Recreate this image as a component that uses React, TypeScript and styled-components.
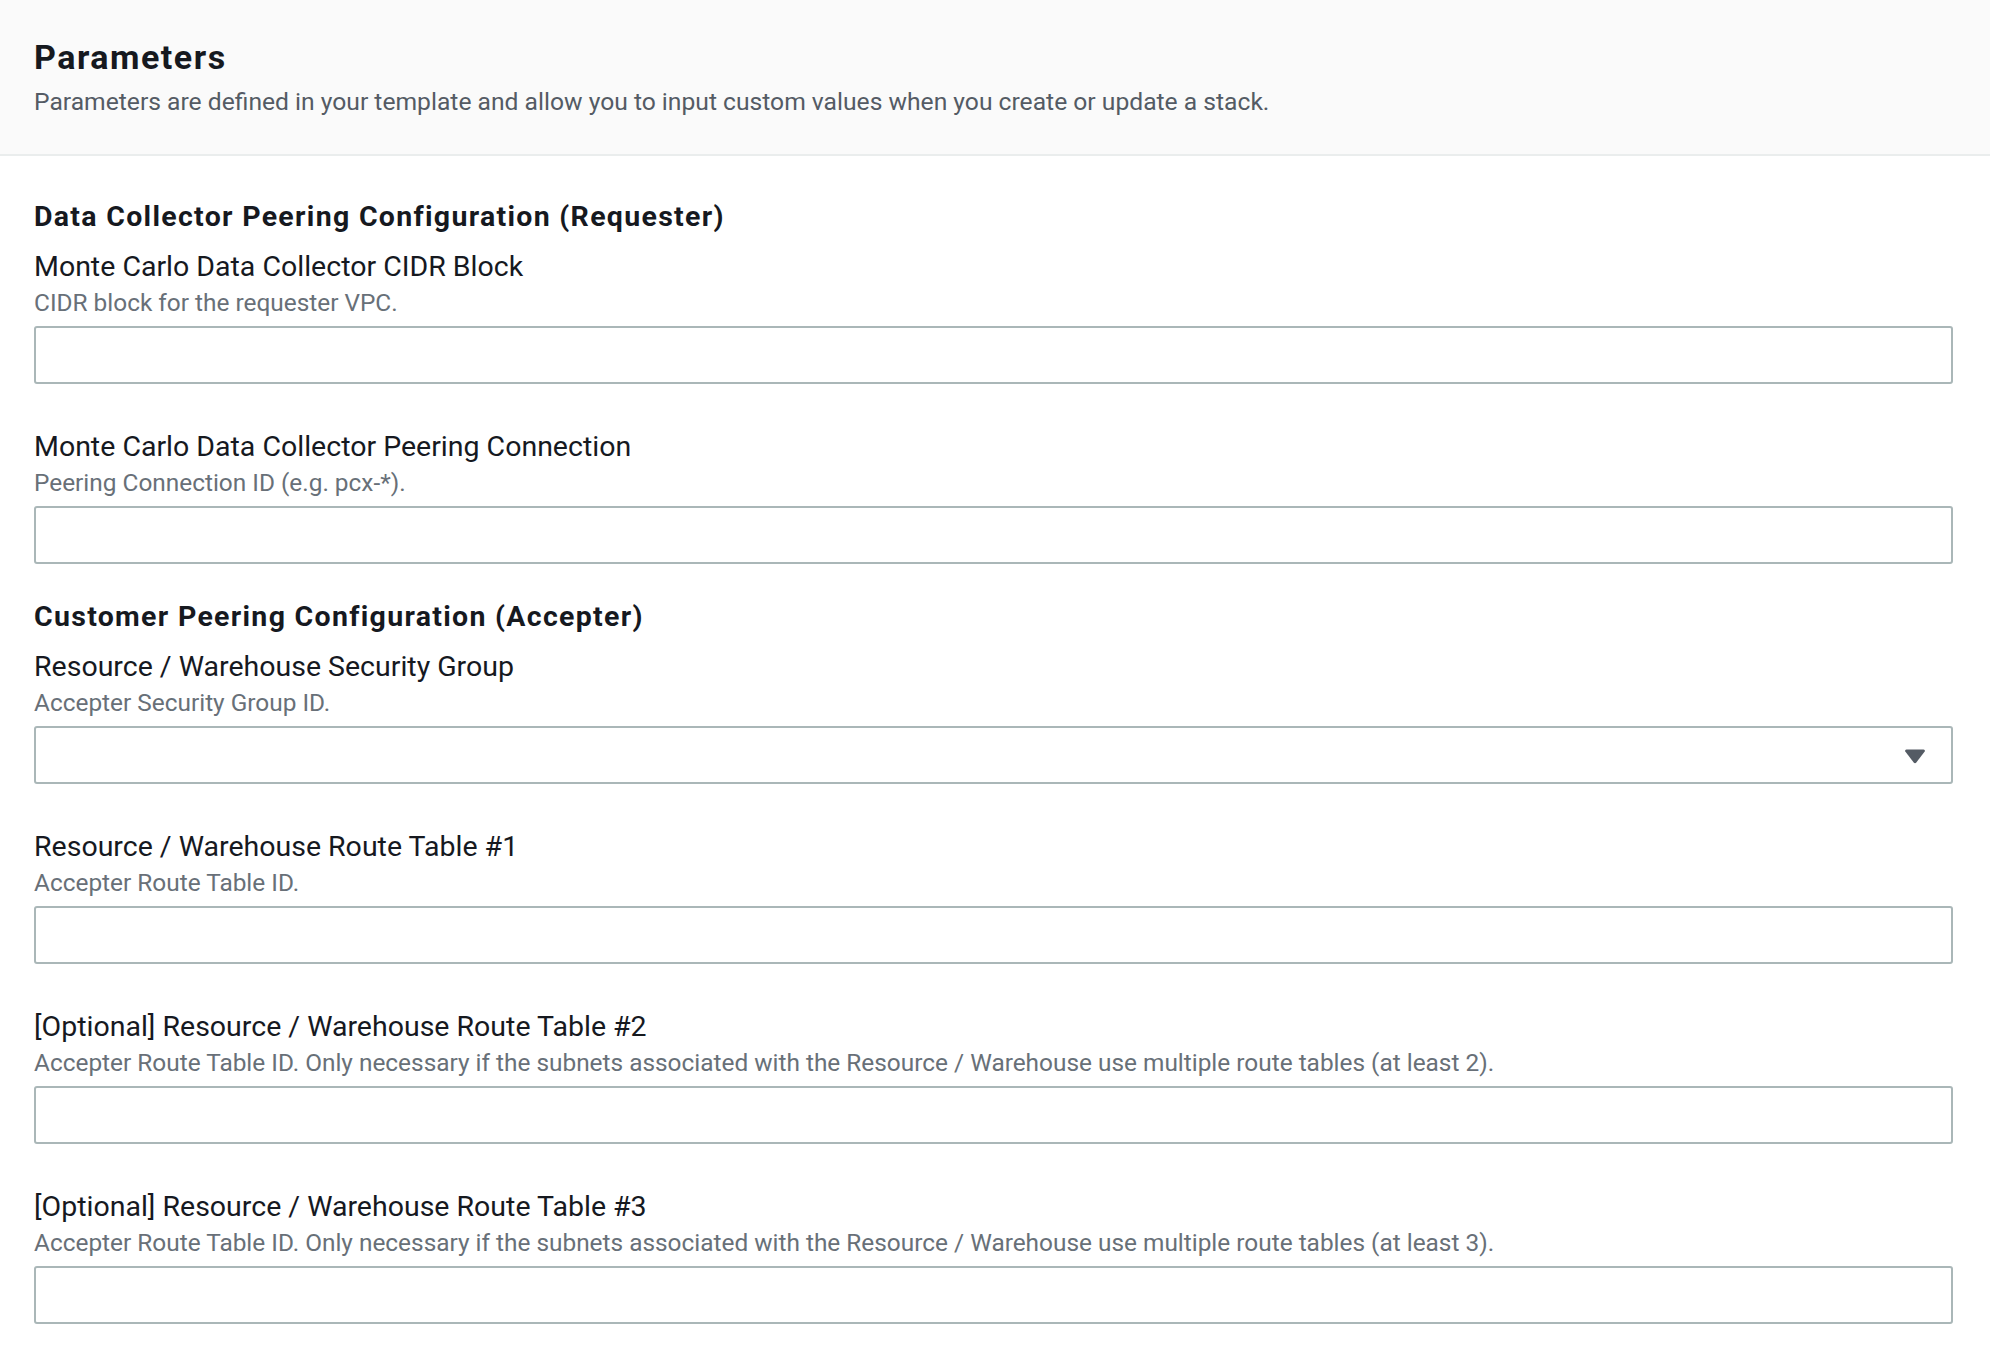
import React from 'react';
import styled, { createGlobalStyle } from 'styled-components';

const GlobalStyle = createGlobalStyle`
  html, body {
    margin: 0;
    padding: 0;
    background: #ffffff;
  }
  body {
    font-family: Roboto, "Liberation Sans", Arial, sans-serif;
    color: #16191f;
  }
`;

type Field = {
  label: string;
  hint: string;
  kind?: 'text' | 'select';
};

type Section = {
  title: string;
  fields: Field[];
};

const sections: Section[] = [
  {
    title: 'Data Collector Peering Configuration (Requester)',
    fields: [
      { label: 'Monte Carlo Data Collector CIDR Block', hint: 'CIDR block for the requester VPC.' },
      { label: 'Monte Carlo Data Collector Peering Connection', hint: 'Peering Connection ID (e.g. pcx-*).' },
    ],
  },
  {
    title: 'Customer Peering Configuration (Accepter)',
    fields: [
      { label: 'Resource / Warehouse Security Group', hint: 'Accepter Security Group ID.', kind: 'select' },
      { label: 'Resource / Warehouse Route Table #1', hint: 'Accepter Route Table ID.' },
      {
        label: '[Optional] Resource / Warehouse Route Table #2',
        hint: 'Accepter Route Table ID. Only necessary if the subnets associated with the Resource / Warehouse use multiple route tables (at least 2).',
      },
      {
        label: '[Optional] Resource / Warehouse Route Table #3',
        hint: 'Accepter Route Table ID. Only necessary if the subnets associated with the Resource / Warehouse use multiple route tables (at least 3).',
      },
    ],
  },
];

const CaretDown: React.FC = () => (
  <svg width="22" height="16" viewBox="0 0 22 16" aria-hidden="true">
    <path d="M2.5 1.5h17c1.2 0 1.8 1.2 1.2 2.1l-8.4 11c-.7.9-1.9.9-2.6 0l-8.4-11C.7 2.7 1.3 1.5 2.5 1.5z" fill="#545b64" />
  </svg>
);

const App: React.FC = () => {
  return (
    <>
      <GlobalStyle />
      <Container>
        <Header>
          <Title>Parameters</Title>
          <Description>
            Parameters are defined in your template and allow you to input custom values when you create or update a stack.
          </Description>
        </Header>
        <Body>
          {sections.map(section => (
            <SectionBlock key={section.title}>
              <SectionTitle>{section.title}</SectionTitle>
              {section.fields.map(field => (
                <FieldBlock key={field.label}>
                  <Label>{field.label}</Label>
                  <Hint>{field.hint}</Hint>
                  {field.kind === 'select' ? (
                    <SelectBox>
                      <CaretDown />
                    </SelectBox>
                  ) : (
                    <TextInput type="text" />
                  )}
                </FieldBlock>
              ))}
            </SectionBlock>
          ))}
        </Body>
      </Container>
    </>
  );
};

const Container = styled.div`
  width: 100%;
  min-height: 1362px;
  background: #ffffff;
`;

const Header = styled.header`
  height: 156px;
  box-sizing: border-box;
  padding: 37px 34px 0;
  background-color: #fafafa;
  border-bottom: 2px solid #eaeded;
`;

const Title = styled.h2`
  margin: 0;
  font-size: 34px;
  line-height: 40px;
  font-weight: 700;
  letter-spacing: 1.5px;
  color: #16191f;
`;

const Description = styled.p`
  margin: 10px 0 0;
  font-size: 24.65px;
  line-height: 30px;
  color: #545b64;
`;

const Body = styled.div`
  padding: 43px 37px 0 34px;
  display: flex;
  flex-direction: column;
  gap: 35px;
`;

const SectionBlock = styled.section`
  display: flex;
  flex-direction: column;
`;

const SectionTitle = styled.h3`
  margin: 0 0 15px;
  font-size: 28.5px;
  line-height: 36px;
  font-weight: 700;
  letter-spacing: 1.3px;
  color: #16191f;
`;

const FieldBlock = styled.div`
  display: flex;
  flex-direction: column;

  & + & {
    margin-top: 46px;
  }
`;

const Label = styled.label`
  font-size: 28.5px;
  line-height: 34px;
  color: #16191f;
`;

const Hint = styled.span`
  margin-top: 4px;
  font-size: 24.4px;
  line-height: 30px;
  color: #687078;
`;

const TextInput = styled.input`
  margin-top: 8px;
  height: 58px;
  box-sizing: border-box;
  width: 100%;
  border: 2px solid #aab7b8;
  border-radius: 3px;
  background: #ffffff;
  padding: 0 16px;
  font-family: inherit;
  font-size: 24px;
  outline: none;
`;

const SelectBox = styled.div`
  margin-top: 8px;
  height: 58px;
  box-sizing: border-box;
  width: 100%;
  border: 2px solid #aab7b8;
  border-radius: 3px;
  background: #ffffff;
  display: flex;
  align-items: center;
  justify-content: flex-end;
  padding: 2px 25px 0 0;
`;

export default App;
